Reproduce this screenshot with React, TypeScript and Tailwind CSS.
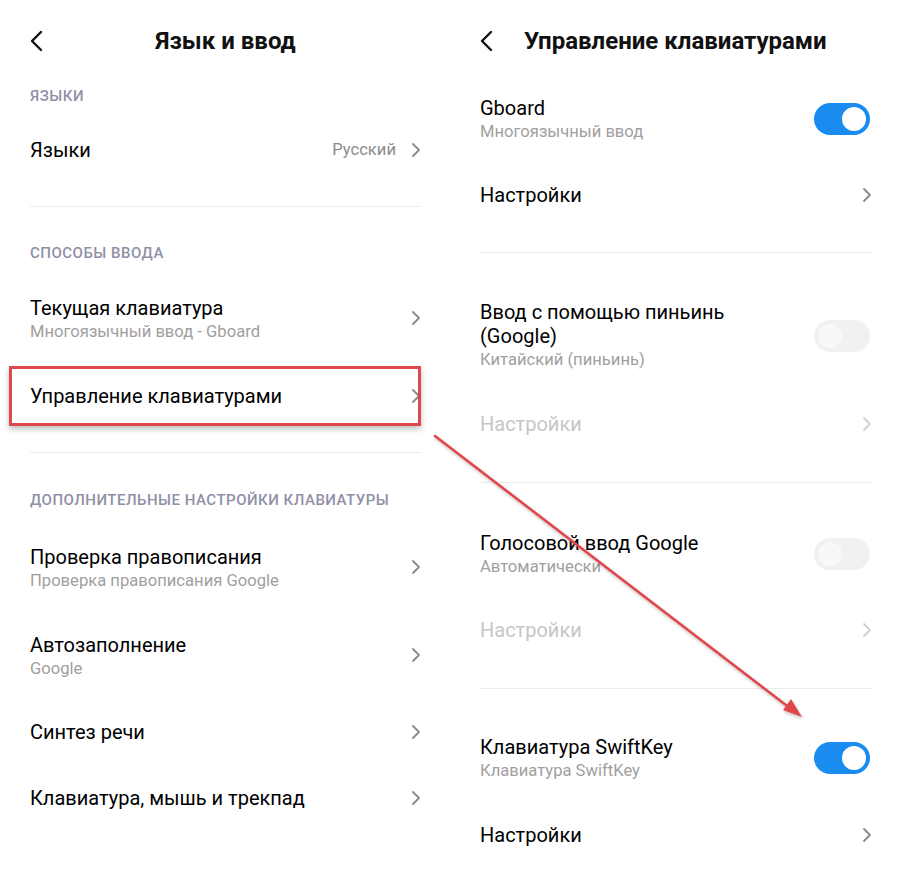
import React from "react";

const font = { fontFamily: "Roboto, 'Noto Sans', sans-serif" };

function Chevron({ light }: { light?: boolean }) {
  return (
    <svg width="10" height="16" viewBox="0 0 10 16" className="shrink-0">
      <path
        d="M2 2 L8 8 L2 14"
        fill="none"
        stroke={light ? "#d0d0d0" : "#8a8a8a"}
        strokeWidth="1.8"
        strokeLinecap="round"
        strokeLinejoin="round"
      />
    </svg>
  );
}

function Back() {
  return (
    <svg width="14" height="22" viewBox="0 0 14 22" className="shrink-0">
      <path
        d="M11 2 L2 11 L11 20"
        fill="none"
        stroke="#111"
        strokeWidth="2.4"
        strokeLinecap="round"
        strokeLinejoin="round"
      />
    </svg>
  );
}

function Toggle({ on }: { on: boolean }) {
  return on ? (
    <div className="w-[56px] h-[32px] mr-[2px] rounded-full bg-[#1a8cf0] flex items-center justify-end pr-[4px] shrink-0">
      <div className="w-[24px] h-[24px] rounded-full bg-white" />
    </div>
  ) : (
    <div className="w-[56px] h-[32px] mr-[2px] rounded-full bg-[#f1f1f1] flex items-center justify-start pl-[4px] shrink-0">
      <div className="w-[24px] h-[24px] rounded-full bg-[#f8f8f8]" />
    </div>
  );
}

function Label({ text, h }: { text: string; h: string }) {
  return (
    <div className={`${h} flex items-center text-[15px] font-medium text-[#8f90a6] tracking-[0.5px]`}>
      {text}
    </div>
  );
}

function Divider({ pt, pb }: { pt: string; pb: string }) {
  return (
    <div className={`${pt} ${pb}`}>
      <div className="h-px bg-[#ececec]" />
    </div>
  );
}

const T = "text-[20px] leading-[24px]";
const S = "text-[16.6px] leading-[24px] text-[#a0a0a0]";

export default function App() {
  return (
    <div className="relative w-[900px] h-[875px] bg-white flex text-black overflow-hidden" style={font}>
      {/* Left panel */}
      <div className="w-[450px] pl-[30px] pr-[29px] flex flex-col">
        <div className="h-[82px] flex items-center relative">
          <Back />
          <div className="absolute inset-0 flex items-center justify-center text-[24px] font-bold text-[#111]">
            Язык и ввод
          </div>
        </div>
        <Label text="ЯЗЫКИ" h="h-[28px]" />
        <div className="h-[80px] flex items-center justify-between">
          <div className={T}>Языки</div>
          <div className="flex items-center gap-[15px]">
            <span className="text-[16.6px] text-[#8c8c8c]">Русский</span>
            <Chevron />
          </div>
        </div>
        <Divider pt="pt-[16px]" pb="pb-[20px]" />
        <Label text="СПОСОБЫ ВВОДА" h="h-[52px]" />
        <div className="h-[78px] flex items-center justify-between">
          <div className="mt-[4px]">
            <div className={T}>Текущая клавиатура</div>
            <div className={S}>Многоязычный ввод - Gboard</div>
          </div>
          <Chevron />
        </div>
        <div className="h-[77px] flex items-center justify-between relative">
          <div className={T}>Управление клавиатурами</div>
          <Chevron />
          <div className="absolute left-[-21px] right-0 top-[9px] h-[60px] border-[3px] border-[#e0474d] shadow-[0_3px_6px_rgba(0,0,0,0.25)]" />
        </div>
        <Divider pt="pt-[18px]" pb="pb-[23px]" />
        <Label text="ДОПОЛНИТЕЛЬНЫЕ НАСТРОЙКИ КЛАВИАТУРЫ" h="h-[48px]" />
        <div className="h-[86px] flex items-center justify-between">
          <div className="mt-[4px]">
            <div className={T}>Проверка правописания</div>
            <div className={S}>Проверка правописания Google</div>
          </div>
          <Chevron />
        </div>
        <div className="h-[89px] flex items-center justify-between">
          <div className="mt-[4px]">
            <div className={T}>Автозаполнение</div>
            <div className={S}>Google</div>
          </div>
          <Chevron />
        </div>
        <div className="h-[65px] flex items-center justify-between">
          <div className={T}>Синтез речи</div>
          <Chevron />
        </div>
        <div className="h-[68px] flex items-center justify-between">
          <div className={T}>Клавиатура, мышь и трекпад</div>
          <Chevron />
        </div>
      </div>

      {/* Right panel */}
      <div className="w-[450px] pl-[30px] pr-[28px] flex flex-col">
        <div className="h-[82px] flex items-center gap-[30px]">
          <Back />
          <div className="text-[24px] font-bold text-[#111]">Управление клавиатурами</div>
        </div>
        <div className="h-[74px] flex items-center justify-between">
          <div className="mt-[2px]">
            <div className={T}>Gboard</div>
            <div className={S}>Многоязычный ввод</div>
          </div>
          <Toggle on />
        </div>
        <div className="h-[78px] flex items-center justify-between">
          <div className={T}>Настройки</div>
          <Chevron />
        </div>
        <Divider pt="pt-[18px]" pb="pb-[29px]" />
        <div className="h-[108px] flex items-center justify-between">
          <div>
            <div className={T}>Ввод с помощью пиньинь<br />(Google)</div>
            <div className={S}>Китайский (пиньинь)</div>
          </div>
          <Toggle on={false} />
        </div>
        <div className="h-[68px] flex items-center justify-between">
          <div className={`${T} text-[#c6c6c6]`}>Настройки</div>
          <Chevron light />
        </div>
        <Divider pt="pt-[24px]" pb="pb-[29px]" />
        <div className="h-[84px] flex items-center justify-between">
          <div className="mt-[2px]">
            <div className={T}>Голосовой ввод Google</div>
            <div className={S}>Автоматически</div>
          </div>
          <Toggle on={false} />
        </div>
        <div className="h-[68px] flex items-center justify-between">
          <div className={`${T} text-[#c6c6c6]`}>Настройки</div>
          <Chevron light />
        </div>
        <Divider pt="pt-[24px]" pb="pb-[29px]" />
        <div className="h-[80px] flex items-center justify-between">
          <div className="mt-[2px]">
            <div className={T}>Клавиатура SwiftKey</div>
            <div className={S}>Клавиатура SwiftKey</div>
          </div>
          <Toggle on />
        </div>
        <div className="h-[74px] flex items-center justify-between">
          <div className={T}>Настройки</div>
          <Chevron />
        </div>
      </div>

      {/* Annotation arrow */}
      <svg className="absolute left-0 top-0 pointer-events-none" width="900" height="875" viewBox="0 0 900 875">
        <defs>
          <filter id="sh" x="-10%" y="-10%" width="120%" height="120%">
            <feDropShadow dx="1" dy="2" stdDeviation="1.5" floodColor="#000" floodOpacity="0.25" />
          </filter>
        </defs>
        <g filter="url(#sh)">
          <line x1="435" y1="436" x2="795" y2="712" stroke="#e0474d" strokeWidth="2.6" strokeLinecap="round" />
          <polygon points="802,717 783,710 791,699" fill="#e0474d" />
        </g>
      </svg>
    </div>
  );
}
